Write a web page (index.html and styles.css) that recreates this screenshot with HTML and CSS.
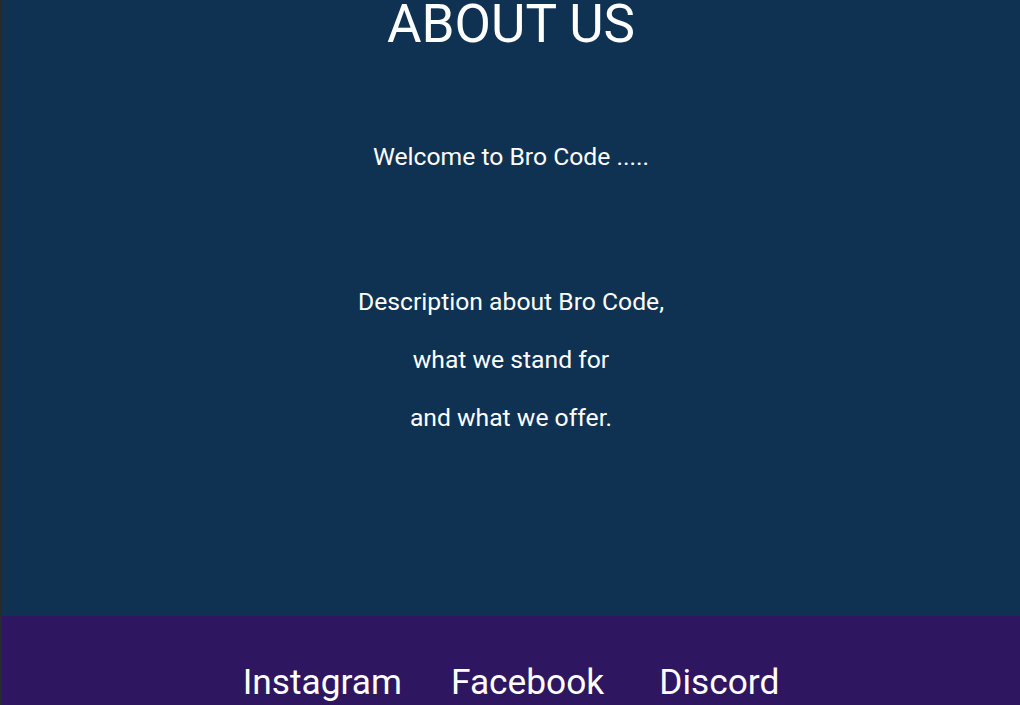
FILE: index.html
```html
<!DOCTYPE html>
<html lang="en">
<head>
<meta charset="utf-8">
<title>About Us</title>
<link rel="stylesheet" href="styles.css">
</head>
<body>
<main class="about">
  <h1 class="title">ABOUT US</h1>
  <p class="welcome">Welcome to Bro Code .....</p>
  <div class="desc">
    <p>Description about Bro Code,</p>
    <p>what we stand for</p>
    <p>and what we offer.</p>
  </div>
</main>
<footer class="footer">
  <nav class="links">
    <a href="#">Instagram</a>
    <a href="#">Facebook</a>
    <a class="last" href="#">Discord</a>
  </nav>
</footer>
</body>
</html>
```
FILE: styles.css
```css
html, body {
  margin: 0;
  padding: 0;
}
body {
  font-family: Roboto, "Liberation Sans", sans-serif;
  color: #ffffff;
  background: #0f3253;
  border-left: 2px solid #2a2a2a;
  height: 705px;
  overflow: hidden;
}
.about {
  height: 616px;
  background: #0f3253;
  display: flex;
  flex-direction: column;
  align-items: center;
  text-align: center;
}
.title {
  font-weight: 400;
  font-size: 53px;
  margin: -6px 0 0;
  line-height: 61px;
}
.welcome {
  font-size: 24.7px;
  line-height: 29px;
  margin: 87px 0 0;
}
.desc {
  margin-top: 116px;
}
.desc p {
  font-size: 24.7px;
  line-height: 29px;
  margin: 0 0 29px;
}
.footer {
  background: #2e1660;
  height: 200px;
}
.links {
  display: flex;
  justify-content: center;
  gap: 49px;
  padding-top: 46px;
}
.links a {
  color: #ffffff;
  text-decoration: none;
  font-size: 35.3px;
  line-height: 41px;
}
.links .last {
  margin-left: 6px;
}
```
